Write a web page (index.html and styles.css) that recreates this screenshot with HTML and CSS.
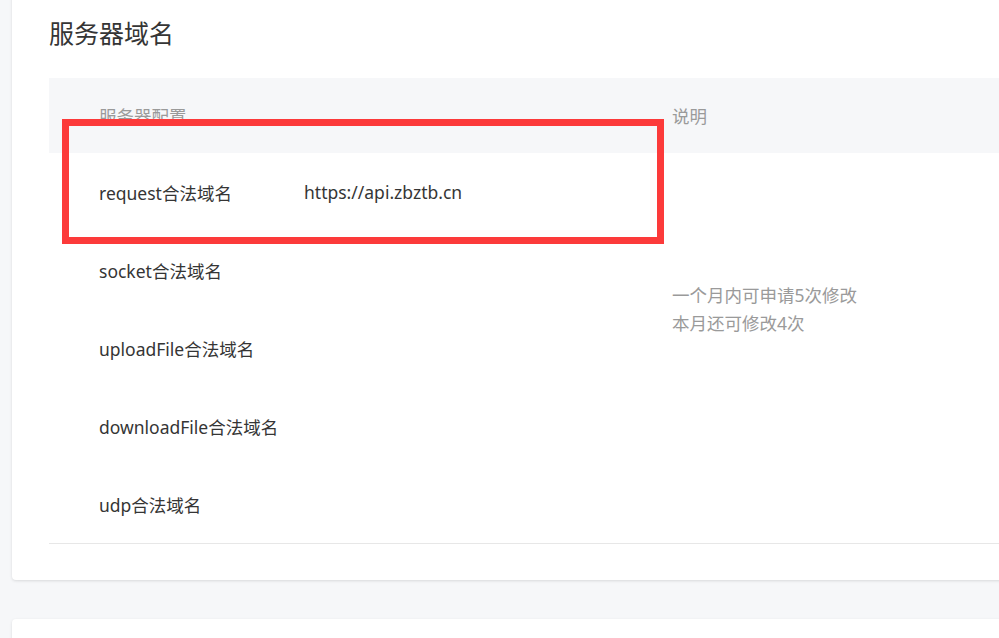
FILE: index.html
```html
<!DOCTYPE html>
<html lang="zh-CN">
<head>
<meta charset="utf-8">
<title>服务器域名</title>
<link rel="stylesheet" href="styles.css">
</head>
<body>
<div class="page">
  <section class="card">
    <h2 class="card-title">服务器域名</h2>
    <div class="table-wrap">
      <table class="domain-table">
        <thead>
          <tr>
            <th class="col-name">服务器配置</th>
            <th class="col-value"></th>
            <th class="col-desc">说明</th>
          </tr>
        </thead>
        <tbody>
          <tr>
            <td class="col-name">request合法域名</td>
            <td class="col-value">https://api.zbztb.cn</td>
            <td class="col-desc" rowspan="4">一个月内可申请5次修改<br>本月还可修改4次</td>
          </tr>
          <tr>
            <td class="col-name">socket合法域名</td>
            <td class="col-value"></td>
          </tr>
          <tr>
            <td class="col-name">uploadFile合法域名</td>
            <td class="col-value"></td>
          </tr>
          <tr>
            <td class="col-name">downloadFile合法域名</td>
            <td class="col-value"></td>
          </tr>
          <tr class="last">
            <td class="col-name">udp合法域名</td>
            <td class="col-value"></td>
            <td class="col-desc"></td>
          </tr>
        </tbody>
      </table>
      <div class="highlight"></div>
    </div>
  </section>
  <section class="card card-next"></section>
</div>
</body>
</html>
```

FILE: styles.css
```css
html, body {
  margin: 0;
  padding: 0;
  background: #f6f7f9;
  overflow: hidden;
}
body {
  font-family: "Noto Sans", "Noto Sans CJK SC", sans-serif;
  color: #353535;
}
.page {
  padding-left: 12px;
  width: 1300px;
}
.card {
  background: #fff;
  border-radius: 4px;
  box-shadow: 0 1px 3px rgba(0, 0, 0, 0.12);
  margin-top: -10px;
  padding: 26px 0 36px 37px;
}
.card-next {
  margin-top: 39px;
  height: 60px;
  padding: 0;
}
.card-title {
  margin: 0 0 27px 0;
  font-size: 25px;
  font-weight: normal;
  line-height: 35px;
  color: #353535;
}
.table-wrap {
  position: relative;
}
.domain-table {
  border-collapse: collapse;
  width: 1200px;
  font-size: 17.5px;
  table-layout: fixed;
}
.domain-table th {
  background: #f6f7f9;
  height: 75px;
  padding: 0;
  text-align: left;
  font-weight: normal;
  color: #9a9a9a;
}
.domain-table td {
  height: 78px;
  padding: 0;
  vertical-align: middle;
  color: #353535;
}
.domain-table .col-name {
  width: 205px;
  padding-left: 50px;
}
.domain-table .col-value {
  width: 318px;
}
.domain-table .col-desc {
  padding-left: 50px;
}
.domain-table td.col-desc {
  color: #9a9a9a;
  line-height: 28px;
}
.domain-table tr.last td {
  border-bottom: 1px solid #e7e7e7;
}
.highlight {
  position: absolute;
  left: 13px;
  top: 41px;
  width: 588px;
  height: 111px;
  border: 7px solid #fc3a3a;
  box-sizing: content-box;
  pointer-events: none;
}
```
